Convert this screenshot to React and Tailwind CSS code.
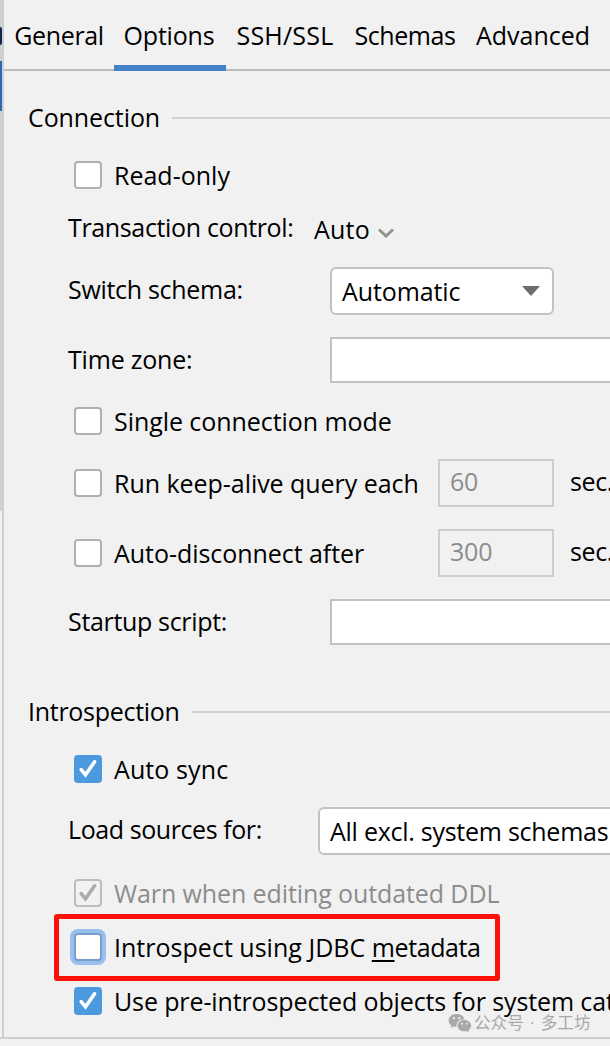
import { useState } from 'react'

const TABS = [
  { name: 'General', width: 'w-[110px]', tracking: 'tracking-[-0.35px]' },
  { name: 'Options', width: 'w-[112px]', tracking: 'tracking-[-0.2px]' },
  { name: 'SSH/SSL', width: 'w-[118px]', tracking: 'tracking-[0.2px]' },
  { name: 'Schemas', width: 'w-[122px]', tracking: 'tracking-[-0.4px]' },
  { name: 'Advanced', width: 'w-[134px]', tracking: 'tracking-normal' },
]

function Tick({ className }) {
  return (
    <svg viewBox="0 0 28 28" className={`w-7 h-7 ${className}`} fill="none" stroke="currentColor" strokeWidth="3.6">
      <path d="M7.2 14.6 11.5 19.8 20.6 6.8" strokeLinecap="round" />
    </svg>
  )
}

function CheckBox({ checked, disabled, focused, onClick }) {
  let look = 'bg-white border-2 border-[#b0b0b0]'
  if (disabled) look = 'bg-[#f2f2f2] border-2 border-[#bdbdbd]'
  else if (checked) look = 'bg-[#4b9ade]'
  else if (focused) look = 'bg-white border-2 border-[#7b9fcb] ring-4 ring-[#97c0ef]'

  return (
    <button
      onClick={onClick}
      disabled={disabled}
      className={`w-7 h-7 shrink-0 rounded-[4px] flex items-center justify-center ${look}`}
    >
      {checked && <Tick className={disabled ? 'shrink-0 text-[#ababab]' : 'shrink-0 text-white'} />}
    </button>
  )
}

function CheckRow({ className = '', tracking = '', disabled, focused, initial = false, label, children }) {
  const [checked, setChecked] = useState(initial)

  return (
    <div className={`flex items-center pl-[70px] ${className}`}>
      <CheckBox checked={checked} disabled={disabled} focused={focused} onClick={() => setChecked(!checked)} />
      <span className={`ml-3 shrink-0 ${tracking} ${disabled ? 'text-[#8c8c8c]' : ''}`}>{label}</span>
      {children}
    </div>
  )
}

function GroupTitle({ title, className, tracking, width }) {
  return (
    <div className={`flex items-center h-7 pl-6 ${className}`}>
      <span className={`shrink-0 pb-0.5 ${width} ${tracking}`}>{title}</span>
      <div className="flex-1 h-0.5 bg-[#d1d1d1]" />
    </div>
  )
}

function Seconds({ value }) {
  return (
    <>
      <div className="ml-auto w-[116px] h-12 shrink-0 border-2 border-[#cdcdcd] px-2.5 pb-1 flex items-center text-[#8c8c8c] tracking-[-0.2px]">
        {value}
      </div>
      <span className="w-14 shrink-0 pl-4 pb-1 tracking-[-0.4px]">sec.</span>
    </>
  )
}

function WeChatIcon() {
  return (
    <svg viewBox="0 0 24 20" className="w-6 h-5 text-[#a9a9a9]" fill="currentColor">
      <path
        fillRule="evenodd"
        d="M8.6 1C4 1 .6 3.900.6 7.500c0 2.100 1.100 3.900 2.900 5.100L2.800 15l2.700-1.400c1 .3 2 .4 3.100.4-.9-4.200 2.600-7.800 7.900-7.800C15.700 3.100 12.500 1 8.600 1ZM5.900 4.100a1.100 1.100 0 1 1 0 2.200 1.100 1.100 0 0 1 0-2.200Zm5.400 0a1.100 1.100 0 1 1 0 2.200 1.100 1.100 0 0 1 0-2.200Z"
      />
      <path
        fillRule="evenodd"
        d="M16.400 7.100c-3.900 0-6.800 2.500-6.800 5.600s2.900 5.600 6.800 5.600c.8 0 1.600-.1 2.300-.3l2.300 1.200-.6-2c1.600-1 2.700-2.700 2.700-4.500 0-3.100-2.900-5.600-6.700-5.600Zm-2.300 2.700a.9.900 0 1 1 0 1.800.9.900 0 0 1 0-1.800Zm4.600 0a.9.900 0 1 1 0 1.800.9.900 0 0 1 0-1.800Z"
      />
    </svg>
  )
}

export default function App() {
  const [tab, setTab] = useState('Options')

  return (
    <div className="relative flex flex-col w-[610px] h-[1046px] overflow-hidden bg-[#f1f1f1] text-black text-[25px] leading-7 whitespace-nowrap font-['Open_Sans',sans-serif]">
      <div className="flex h-[1037px] shrink-0">
        {/* Edge of the pane on the left */}
        <div className="w-1 shrink-0 flex flex-col border-r-2 border-[#cfcfcf]">
          <div className="h-[61px] bg-[#cfcfcf] pt-[27px]">
            <div className="w-0.5 h-[18px] rounded-r-full bg-[#10284c]" />
          </div>
          <div className="h-[50px] bg-[#2f68b0]" />
          <div className="h-[400px] bg-[#cfcfcf]" />
        </div>

        <div className="flex-1 min-w-0">
          {/* Tabs */}
          <div className="flex h-[71px] border-b-2 border-[#bdbdbd]">
            {TABS.map((t) => (
              <button
                key={t.name}
                onClick={() => setTab(t.name)}
                className={`h-[71px] shrink-0 text-center ${t.width} ${t.tracking} ${
                  tab === t.name ? 'border-b-6 border-[#4381c8] pt-[5px] pr-0.5' : 'pb-[1px]'
                }`}
              >
                {t.name}
              </button>
            ))}
          </div>

          {/* Connection */}
          <GroupTitle title="Connection" className="mt-[33px]" width="w-36" tracking="tracking-[-0.1px]" />
          <CheckRow className="mt-[29px] h-7" label="Read-only" />

          <div className="mt-6 h-7 pl-16 flex items-center">
            <span className="w-[246px] shrink-0 tracking-[-0.35px]">Transaction control:</span>
            <span className="pt-1 tracking-[0.2px]">Auto</span>
            <svg viewBox="0 0 16 10" className="ml-2 mt-3 w-4 h-2.5" fill="none" stroke="#8f9192" strokeWidth="3">
              <path d="M1 1.500 8 8 15 1.500" />
            </svg>
          </div>

          <div className="mt-[26px] h-12 pl-16 flex items-center">
            <span className="w-[262px] shrink-0 pb-1 tracking-[-0.3px]">Switch schema:</span>
            <div className="w-56 h-12 bg-white border-2 border-[#c2c2c2] rounded-md pl-2.5 pr-3 flex items-center justify-between">
              <span className="tracking-[-0.1px]">Automatic</span>
              <svg viewBox="0 0 18 10" className="w-[18px] h-2.5" fill="#6e6e6e">
                <path d="M0 0H18L9 10Z" />
              </svg>
            </div>
          </div>

          <div className="mt-[22px] h-[46px] pl-16 flex items-center">
            <span className="w-[262px] shrink-0 pb-0.5 tracking-[-0.2px]">Time zone:</span>
            <div className="w-72 h-[46px] shrink-0 bg-white border-2 border-[#c2c2c2]" />
          </div>

          <CheckRow className="mt-6 h-7" label="Single connection mode" tracking="tracking-[-0.06px]" />
          <CheckRow className="mt-6 h-12" label="Run keep-alive query each" tracking="tracking-[-0.04px]">
            <Seconds value="60" />
          </CheckRow>
          <CheckRow className="mt-[22px] h-12" label="Auto-disconnect after" tracking="tracking-[-0.05px]">
            <Seconds value="300" />
          </CheckRow>

          <div className="mt-[22px] h-[46px] pl-16 flex items-center">
            <span className="w-[262px] shrink-0 pb-0.5 tracking-[-0.33px]">Startup script:</span>
            <div className="w-72 h-[46px] shrink-0 bg-white border-2 border-[#c2c2c2]" />
          </div>

          {/* Introspection */}
          <GroupTitle title="Introspection" className="mt-[53px]" width="w-41" tracking="tracking-[-0.28px]" />
          <CheckRow className="mt-[29px] h-7" label="Auto sync" tracking="tracking-[0.1px]" initial />

          <div className="mt-6 h-12 pl-16 flex items-center">
            <span className="w-[250px] shrink-0 pb-1 tracking-[-0.42px]">Load sources for:</span>
            <div className="w-80 h-12 shrink-0 bg-white border-2 border-[#c2c2c2] rounded-md pl-2.5 flex items-center">
              <span className="tracking-[-0.26px]">All excl. system schemas</span>
            </div>
          </div>

          <CheckRow
            className="mt-6 h-7"
            label="Warn when editing outdated DDL"
            tracking="tracking-[-0.1px]"
            initial
            disabled
          />
          <CheckRow
            className="mt-[26px] h-7"
            tracking="tracking-[0.02px]"
            focused
            label={
              <>
                Introspect using JDBC{' '}
                <span className="tracking-[-0.4px]">
                  <span className="underline decoration-2 underline-offset-[3px]">m</span>etadata
                </span>
              </>
            }
          />
          <CheckRow
            className="mt-[26px] h-7"
            label="Use pre-introspected objects for system catalogs"
            tracking="tracking-[-0.12px]"
            initial
          />
        </div>
      </div>
      <div className="h-0.5 shrink-0 bg-[#cfcfcf]" />

      {/* Highlight frame */}
      <div className="absolute left-[54px] top-[914px] w-[446px] h-[67px] border-5 border-[#fb1108] rounded-[3px] pointer-events-none" />

      {/* Watermark */}
      <div className="absolute left-[448px] top-[1011px] flex items-center text-[#a9a9a9] text-[16.6px] leading-6 font-['Open_Sans','Noto_Sans_CJK_SC',sans-serif]">
        <WeChatIcon />
        <span className="ml-0.5 [word-spacing:2px]">公众号 · 多工坊</span>
      </div>
    </div>
  )
}
